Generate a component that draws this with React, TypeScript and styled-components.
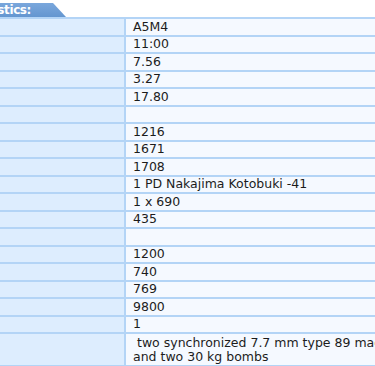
import React from 'react';
import styled, { createGlobalStyle } from 'styled-components';

const GlobalStyle = createGlobalStyle`
  html, body {
    margin: 0;
    padding: 0;
    background: #ffffff;
    overflow: hidden;
  }
  body {
    font-family: "DejaVu Sans", Verdana, sans-serif;
    font-size: 12.5px;
    color: #1c1c1c;
  }
`;

const Page = styled.div`
  width: 760px;
  margin-left: -126px;
  padding-top: 3px;
`;

const TabRow = styled.div`
  display: flex;
  height: 14px;
`;

const Tab = styled.div`
  width: 192px;
  height: 14px;
  box-sizing: border-box;
  padding-right: 35px;
  text-align: right;
  line-height: 14px;
  font-weight: bold;
  font-size: 12px;
  letter-spacing: -0.4px;
  color: #ffffff;
  background: linear-gradient(#7aa7dc, #6496d0);
  clip-path: polygon(0 0, 179px 0, 192px 100%, 0 100%);
`;

const Table = styled.table`
  border-collapse: collapse;
  border-spacing: 0;
  width: 700px;
`;

const Row = styled.tr<{ $tall?: boolean }>`
  height: ${(p) => (p.$tall ? '33px' : '17.5px')};
`;

const Label = styled.td`
  width: 250px;
  padding: 0;
  background: #ddedfe;
  border: 2px solid #b3d4f6;
  border-left: none;
`;

const Value = styled.td`
  padding: 0 0 0 7px;
  background: #f5f9ff;
  border: 2px solid #b3d4f6;
  line-height: 14px;
  vertical-align: middle;
  white-space: pre-wrap;
`;

const Wrap = styled.div`
  width: 318px;
`;

const values: string[] = [
  'A5M4',
  '11:00',
  '7.56',
  '3.27',
  '17.80',
  '',
  '1216',
  '1671',
  '1708',
  '1 PD Nakajima Kotobuki -41',
  '1 x 690',
  '435',
  '',
  '1200',
  '740',
  '769',
  '9800',
  '1',
];

export default function App() {
  return (
    <Page>
      <GlobalStyle />
      <TabRow>
        <Tab>Characteristics:</Tab>
      </TabRow>
      <Table>
        <tbody>
          {values.map((v, i) => (
            <Row key={i}>
              <Label />
              <Value>{v}</Value>
            </Row>
          ))}
          <Row $tall>
            <Label />
            <Value>
              <Wrap>{' two synchronized 7.7 mm type 89 machine guns and two 30 kg bombs'}</Wrap>
            </Value>
          </Row>
        </tbody>
      </Table>
    </Page>
  );
}
